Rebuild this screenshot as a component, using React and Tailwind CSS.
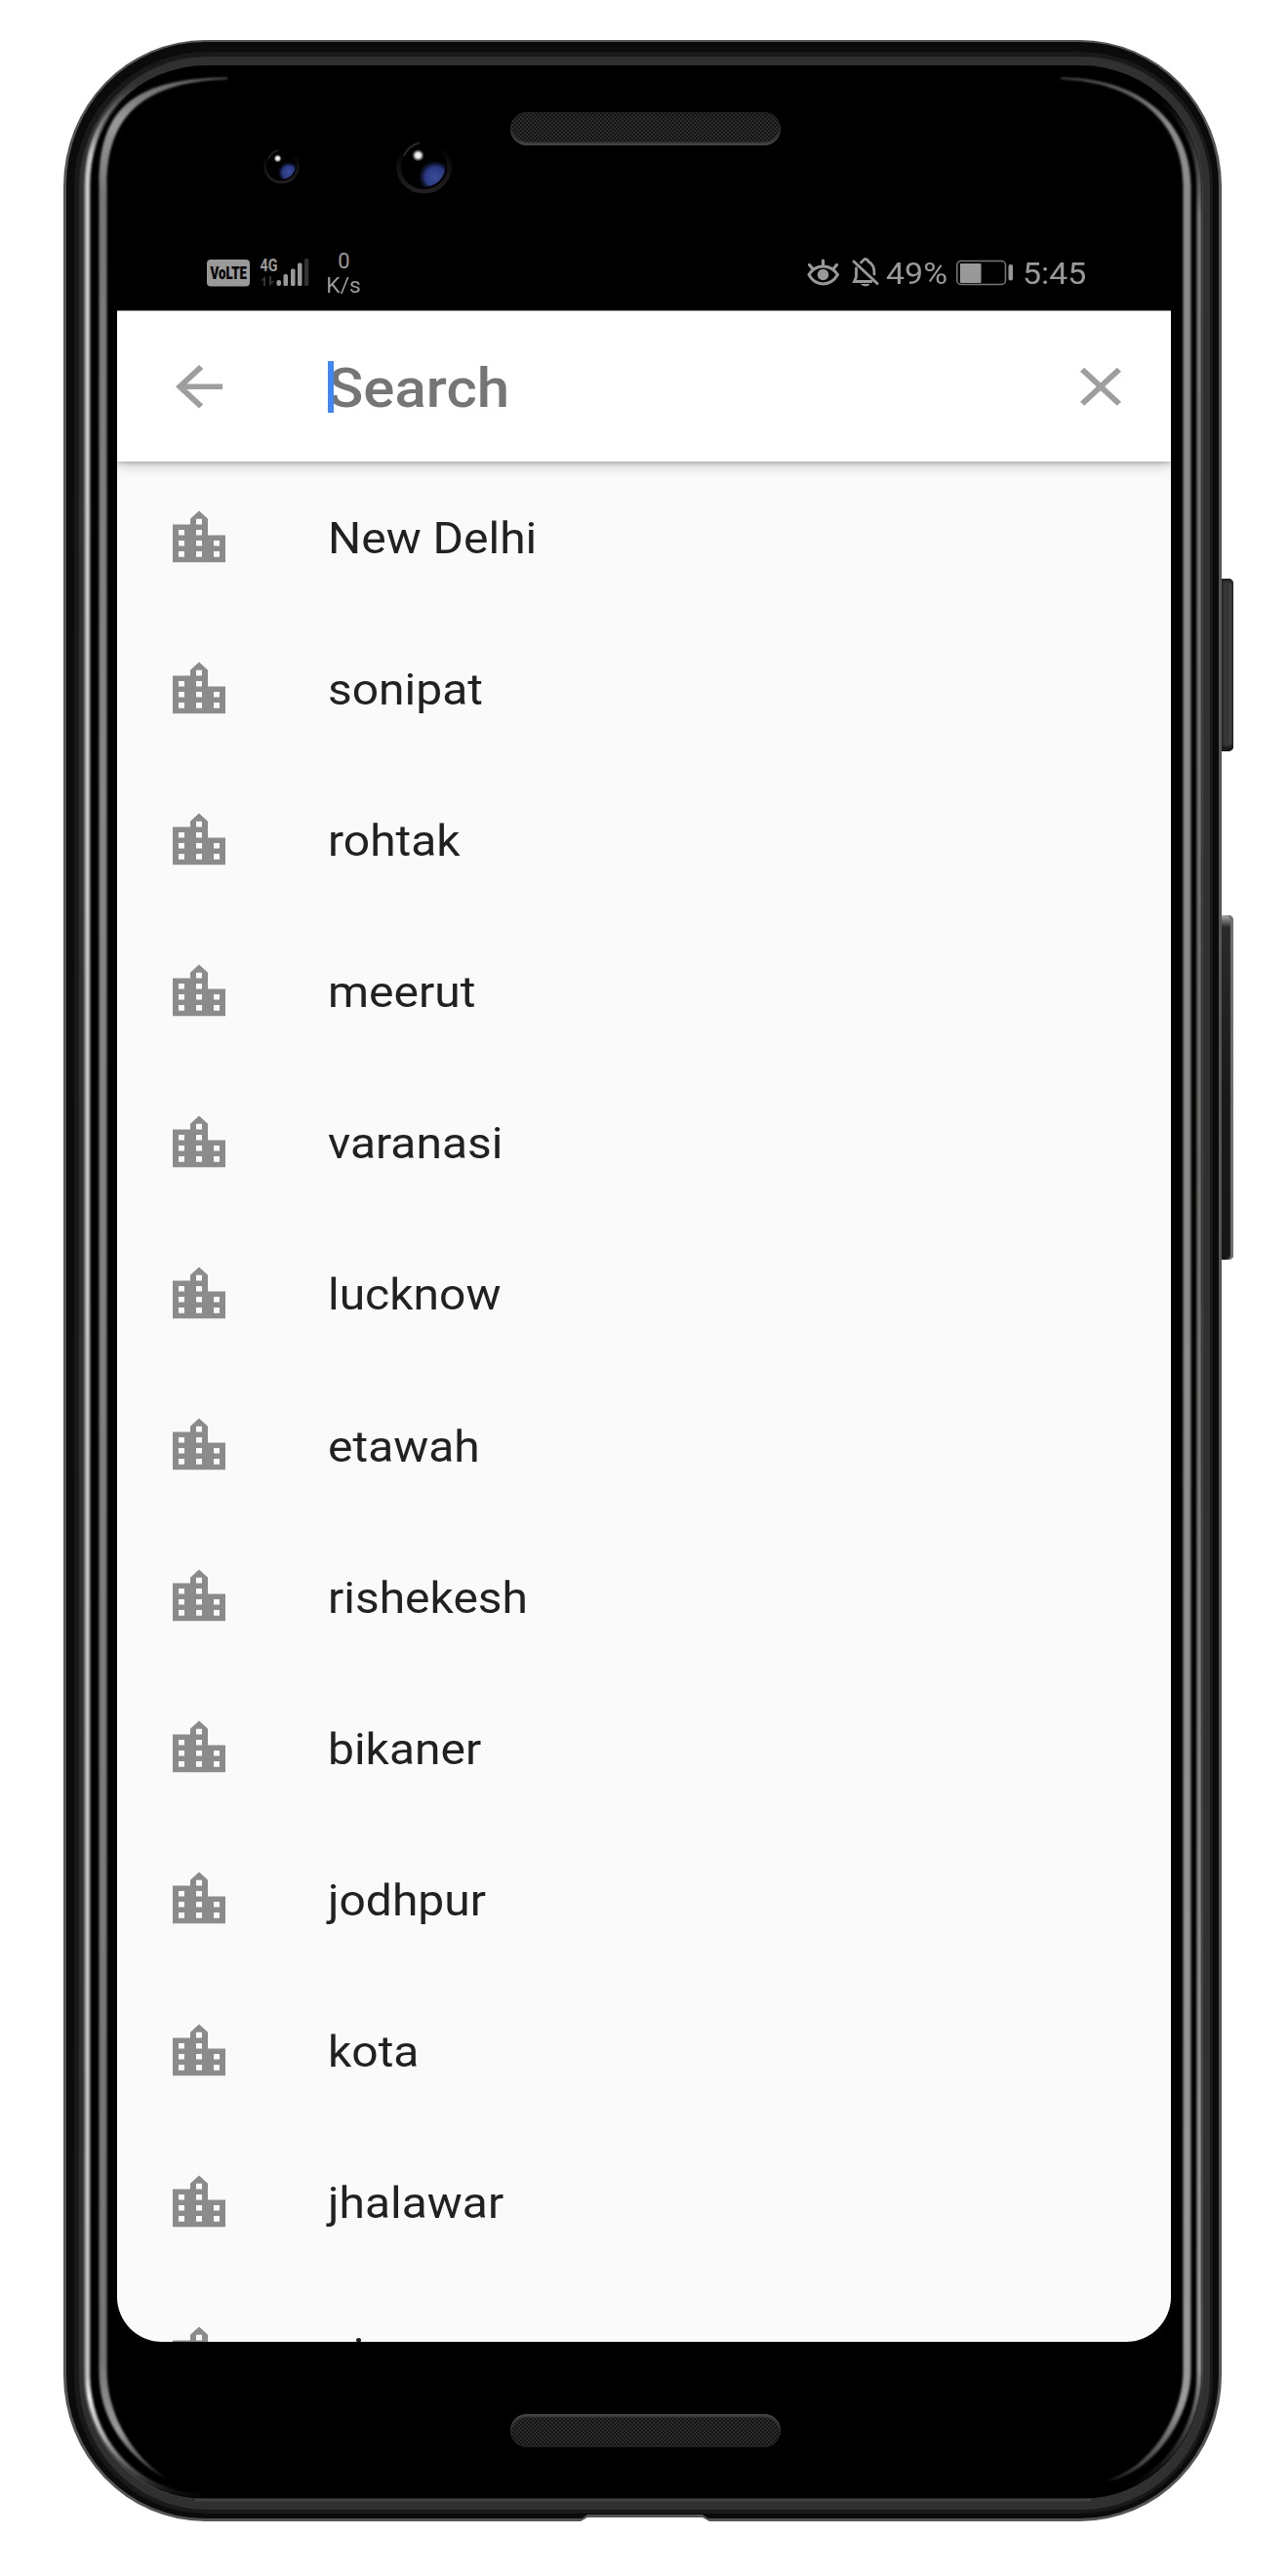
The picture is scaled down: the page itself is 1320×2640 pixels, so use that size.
import React from "react";

const cities = [
  "New Delhi",
  "sonipat",
  "rohtak",
  "meerut",
  "varanasi",
  "lucknow",
  "etawah",
  "rishekesh",
  "bikaner",
  "jodhpur",
  "kota",
  "jhalawar",
  "ajmer",
];

function CityIcon() {
  return (
    <svg viewBox="0 0 24 24" preserveAspectRatio="none" className="h-[66.5px] w-[72px] shrink-0 fill-[#8b8b8b]">
      <path d="M15 11V5l-3-3-3 3v2H3v14h18V11h-6zm-8 8H5v-2h2v2zm0-4H5v-2h2v2zm0-4H5V9h2v2zm6 8h-2v-2h2v2zm0-4h-2v-2h2v2zm0-4h-2V9h2v2zm0-4h-2V5h2v2zm6 12h-2v-2h2v2zm0-4h-2v-2h2v2z" />
    </svg>
  );
}

function Camera({ className, id }) {
  return (
    <svg viewBox="0 0 57 54" preserveAspectRatio="none" className={className}>
      <defs>
        <linearGradient id={id + "rim"} x1="0" y1="0" x2="0" y2="1">
          <stop offset="0.1" stopColor="#000" />
          <stop offset="0.5" stopColor="#111" />
          <stop offset="1" stopColor="#221e22" />
        </linearGradient>
        <radialGradient id={id + "blue"} gradientUnits="userSpaceOnUse" cx="40" cy="37" r="17">
          <stop offset="0" stopColor="#3a4c96" />
          <stop offset="0.600" stopColor="#2a3a82" />
          <stop offset="1" stopColor="#1c2860" stopOpacity="0" />
        </radialGradient>
        <radialGradient id={id + "glint"}>
          <stop offset="0" stopColor="#fff" />
          <stop offset="0.45" stopColor="#ddd" />
          <stop offset="1" stopColor="#888" stopOpacity="0" />
        </radialGradient>
        <clipPath id={id + "clip"}>
          <ellipse cx="28.5" cy="26" rx="22" ry="21.5" />
        </clipPath>
      </defs>
      <ellipse cx="28.5" cy="27" rx="26" ry="25" fill="#000" stroke={`url(#${id}rim)`} strokeWidth="4.5" />
      <path d="M8 15C11 8 17 3 24 1.500" fill="none" stroke="#292929" strokeWidth="2" />
      <circle cx="40" cy="37" r="17" fill={`url(#${id}blue)`} clipPath={`url(#${id}clip)`} />
      <circle cx="22.500" cy="14.500" r="6.500" fill={`url(#${id}glint)`} />
    </svg>
  );
}

function Speaker({ className }) {
  return (
    <div className={"h-[34px] w-[277px] rounded-[17px] bg-[repeating-conic-gradient(#2c2c2c_0_25%,#141414_0_50%)] bg-[length:4px_4px] " + className} />
  );
}

function StatusBar() {
  return (
    <div className="flex h-[68px] items-start font-[Roboto,sans-serif] text-[#999]">
      <svg width="106" height="60" viewBox="212 250 106 60" className="ml-[125px] shrink-0">
        <rect x="212" y="266" width="44" height="27.500" rx="4" fill="#999" />
        <text x="215.500" y="286" fontSize="18" fontWeight="900" textLength="37.500" lengthAdjust="spacingAndGlyphs" fill="#000">VoLTE</text>
        <text x="266.500" y="277.500" fontSize="17.500" fontWeight="700" textLength="18" lengthAdjust="spacingAndGlyphs" fill="#999">4G</text>
        <path d="M267 287.500L272 283V293H270V287.500ZM276 283H278V288H281.500L276 293Z" fill="#333" />
        <g fill="#999">
          <rect x="283.500" y="287" width="4.500" height="6" rx="2" />
          <rect x="290.500" y="281" width="4.500" height="12" rx="1.500" />
          <rect x="298" y="275.500" width="4.500" height="17.500" rx="1.500" />
          <rect x="305" y="269.500" width="4.500" height="23.500" rx="1.500" />
        </g>
        <rect x="312" y="265" width="4.300" height="28" rx="1.500" fill="#333" />
      </svg>
      <div className="ml-[11.500px] mt-[5px] flex w-[46px] flex-col items-center text-[22px] leading-[25px]">
        <span>0</span>
        <span className="scale-x-[1.04]">K/s</span>
      </div>
      <svg width="78" height="50" viewBox="825 250 78 50" className="ml-[449.500px] shrink-0" fill="none" stroke="#999" strokeLinecap="round">
        <path d="M829 281.500C836 270 851 270 858.500 281.500C851 294 836 294 829 281.500Z" strokeWidth="3" />
        <circle cx="843.500" cy="281.500" r="5.800" fill="#999" stroke="none" />
        <path d="M843.500 267V272M829.500 271.500L833 275.500M857.500 271.500L854 275.500" strokeWidth="3.200" />
        <path d="M875 268L899 290.500" strokeWidth="3" />
        <path d="M877.500 275V284L875.500 288.500H893M882.500 269C885 266.500 885 267 885 266.500C886 265 889 265 890 268C895 271 896 274 896 281" strokeWidth="2.800" />
        <path d="M883 291.500H891Q887 294.500 883 291.500Z" fill="#999" strokeWidth="1" />
      </svg>
      <span className="ml-[4.500px] mt-[13.500px] w-[71.500px] origin-left scale-x-[1.06] text-[32px] leading-[32px]">49%</span>
      <svg width="60" height="40" viewBox="979 260 60 40" className="mt-[10px] shrink-0">
        <rect x="980.800" y="267.500" width="49.700" height="24" rx="4" fill="none" stroke="#777" strokeWidth="1.500" />
        <rect x="984" y="270" width="21.500" height="20" rx="1" fill="#999" />
        <rect x="1033.500" y="271" width="4.500" height="16.500" rx="2" fill="#999" />
      </svg>
      <span className="ml-[9px] mt-[13.500px] origin-left scale-x-[1.06] text-[32px] leading-[32px]">5:45</span>
    </div>
  );
}

function Screen() {
  return (
    <div className="ml-[33px] flex h-[2082px] w-[1080px] flex-col overflow-hidden rounded-b-[46px] bg-[#fafafa] font-[Roboto,sans-serif]">
      <div className="relative z-10 flex h-[155px] shrink-0 items-center border-t border-[#999] bg-white shadow-[0_3px_14px_rgba(0,0,0,0.22),0_2px_4px_rgba(0,0,0,0.18)]">
        <svg viewBox="0 0 24 24" preserveAspectRatio="none" className="ml-[48px] h-[66.500px] w-[72px] fill-[#9e9e9e]">
          <path d="M20 11H7.830l5.590-5.590L12 4l-8 8 8 8 1.410-1.410L7.830 13H20v-2z" />
        </svg>
        <div className="ml-[96px] flex h-[53px] w-[700px] items-center">
          <div className="z-10 h-[53px] w-[6px] shrink-0 bg-[#4285f4]" />
          <span className="-ml-[6px] origin-left scale-x-[1.083] pt-[6px] text-[55.400px] font-medium leading-[64px] text-[#757575]">Search</span>
        </div>
        <svg viewBox="0 0 24 24" preserveAspectRatio="none" className="ml-[56px] h-[66.500px] w-[72px] fill-[#9e9e9e]">
          <path d="M19 6.410L17.590 5 12 10.590 6.410 5 5 6.410 10.590 12 5 17.590 6.410 19 12 13.410 17.590 19 19 17.590 13.410 12z" />
        </svg>
      </div>
      <div className="flex flex-col pt-[0.500px]">
        {cities.map((city) => (
          <div key={city} className="flex h-[155.080px] shrink-0 items-center pl-[48px]">
            <CityIcon />
            <span className="ml-[96px] origin-left scale-x-[1.083] whitespace-nowrap pt-[2px] text-[44.300px] leading-[52px] text-[#212121]">{city}</span>
          </div>
        ))}
      </div>
    </div>
  );
}

function Highlights() {
  return (
    <svg width="1187" height="2543" viewBox="65 41 1187 2543" className="pointer-events-none absolute left-0 top-0">
      <defs>
        <filter id="soft" x="-20%" y="-2%" width="140%" height="104%">
          <feGaussianBlur stdDeviation="0.900" />
        </filter>
        <linearGradient id="innerL" gradientUnits="userSpaceOnUse" x1="0" y1="79" x2="0" y2="2540">
          <stop offset="0" stopColor="#666" />
          <stop offset="0.018" stopColor="#999" />
          <stop offset="0.05" stopColor="#767676" />
          <stop offset="0.300" stopColor="#868686" />
          <stop offset="0.950" stopColor="#747474" />
          <stop offset="0.980" stopColor="#999" />
          <stop offset="1" stopColor="#333" />
        </linearGradient>
        <linearGradient id="innerR" gradientUnits="userSpaceOnUse" x1="0" y1="79" x2="0" y2="2540">
          <stop offset="0" stopColor="#555" />
          <stop offset="0.020" stopColor="#8c8c8c" />
          <stop offset="0.500" stopColor="#8c8c8c" />
          <stop offset="0.970" stopColor="#999" />
          <stop offset="1" stopColor="#333" />
        </linearGradient>
        <linearGradient id="outerL" gradientUnits="userSpaceOnUse" x1="0" y1="85" x2="0" y2="2560">
          <stop offset="0" stopColor="#aaa" stopOpacity="0" />
          <stop offset="0.030" stopColor="#c8c8c8" />
          <stop offset="0.950" stopColor="#c0c0c0" />
          <stop offset="0.958" stopColor="#e8e8e8" />
          <stop offset="0.975" stopColor="#aaa" />
          <stop offset="1" stopColor="#aaa" stopOpacity="0" />
        </linearGradient>
        <linearGradient id="outerR" gradientUnits="userSpaceOnUse" x1="0" y1="100" x2="0" y2="2550">
          <stop offset="0" stopColor="#777" stopOpacity="0" />
          <stop offset="0.050" stopColor="#7c7c7c" />
          <stop offset="0.450" stopColor="#6e706c" />
          <stop offset="0.950" stopColor="#999" />
          <stop offset="1" stopColor="#777" stopOpacity="0" />
        </linearGradient>
      </defs>
      <g filter="url(#soft)">
        <path d="M101.500 190C101.500 118 129 80 233 79.500V81C140 84 109.500 125 109.500 190V2430C110 2470 130 2512 170 2540C125 2515 101.500 2475 101.500 2430Z" fill="url(#innerL)" />
        <path d="M1220.500 190C1220.500 135 1180 80 1087 79.500V81C1165 84 1212.500 125 1212.500 190V2430C1212.500 2475 1180 2530 1132 2543C1185 2535 1220.500 2475 1220.500 2430Z" fill="url(#innerR)" />
        <path d="M190 69.500C130 76 89.500 125 89.500 191V2433C89.500 2497 135 2555 207 2559" fill="none" stroke="url(#outerL)" strokeWidth="5.500" />
        <path d="M1110 69.500C1180 74 1229 125 1229 191V2433C1229 2500 1180 2558 1110 2559" fill="none" stroke="url(#outerR)" strokeWidth="5" />
      </g>
      <path d="M200 2562H1118" stroke="#424242" strokeWidth="3" />
    </svg>
  );
}

export default function App() {
  return (
    <div className="h-[2640px] w-[1320px] overflow-hidden bg-white pl-[65px] pt-[41px]">
      <div className="flex">
        <div className="relative h-[2543px] w-[1187px] shrink-0 rounded-[145px/150px] bg-[#555] pb-[3px] pl-[3px] pr-[3px] pt-[2px]">
          <div className="h-full rounded-[142px/147px] bg-[#0b0b0b] pb-[5px] pl-[8px] pr-[6px] pt-[10px]">
            <div className="h-full rounded-[135px/138px] bg-[#191919] pb-[4px] pl-[5px] pr-[3px] pt-[5px]">
              <div className="h-full rounded-[131px/134px] bg-[#303030] pb-[11px] pl-[6px] pr-[8px] pt-[9px]">
                <div className="flex h-full flex-col rounded-[124px/125px] bg-black">
                  <div className="flex h-[183px] shrink-0 items-start pl-[183px]">
                    <Camera id="a" className="mt-[86px] h-[35px] w-[37px]" />
                    <Camera id="b" className="ml-[99px] mt-[78px] h-[53px] w-[57px]" />
                    <Speaker className="ml-[60px] mt-[48px] shadow-[inset_0_-3px_2px_#444,inset_0_1px_2px_#222]" />
                  </div>
                  <StatusBar />
                  <Screen />
                  <Speaker className="ml-[436px] mt-[74px] shadow-[inset_0_3px_2px_#444,inset_0_-1px_2px_#222]" />
                </div>
              </div>
            </div>
          </div>
          <Highlights />
          <svg width="132" height="7" viewBox="0 0 132 7" className="absolute bottom-0 left-[530px]">
            <path d="M0 7V5L7 0H125L132 5V7Z" fill="#555" />
            <path d="M0 7L7 3H125L132 7Z" fill="#fff" />
          </svg>
        </div>
        <div className="flex flex-col">
          <div className="mt-[552px] h-[177px] w-[12px] rounded-r-[5px] bg-[linear-gradient(90deg,#2c2c2c,#3a3a3a_35%,#333_50%,#454545_80%,#222)] shadow-[inset_0_3px_3px_#222,inset_0_-5px_3px_#1a1a1a]" />
          <div className="mt-[168px] h-[353px] w-[12px] rounded-r-[5px] bg-[linear-gradient(180deg,#aaa,#2a2a2a_3.500%,#1a1a1a_50%,#161616)] shadow-[inset_-3px_0_1px_#707070]" />
        </div>
      </div>
    </div>
  );
}
